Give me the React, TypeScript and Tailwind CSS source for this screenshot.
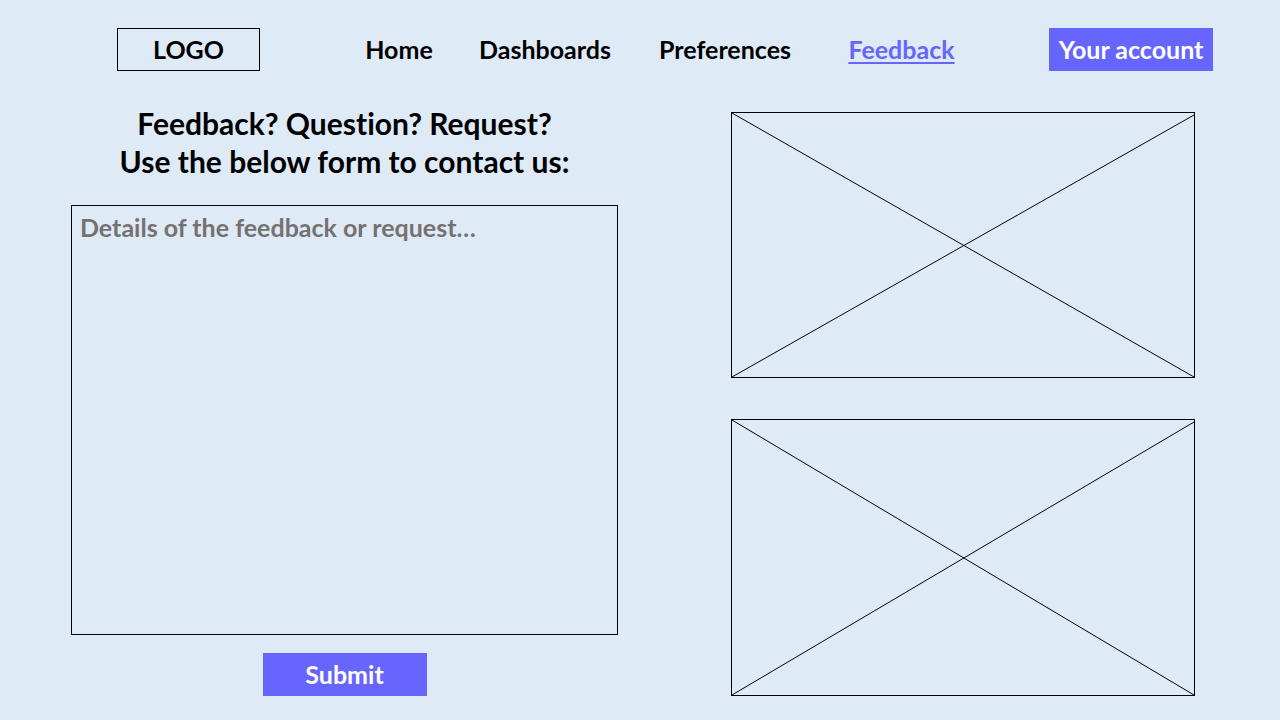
const navItems = [
  { label: "Home", href: "#home" },
  { label: "Dashboards", href: "#dashboards" },
  { label: "Preferences", href: "#preferences" },
  { label: "Feedback", href: "#feedback", current: true },
];

function ImagePlaceholder({ label }: { label: string }) {
  return (
    <div className="flex border border-black" role="img" aria-label={label}>
      <svg className="w-full" stroke="black" strokeWidth="1" aria-hidden="true">
        <line x1="0" y1="0" x2="100%" y2="100%" />
        <line x1="0" y1="100%" x2="100%" y2="2" />
      </svg>
    </div>
  );
}

export default function App() {
  return (
    <div className="flex min-h-screen flex-col bg-[#deeaf6] pt-7 pb-6 font-['Lato',sans-serif] text-[25px] leading-9 font-bold text-black [font-variant-ligatures:none]">
      <header className="flex items-center pr-[67px] pl-[117px]">
        <a
          href="#home"
          className="flex h-[43px] w-[143px] shrink-0 items-center justify-center border border-black pb-0.5"
        >
          LOGO
        </a>
        <nav
          aria-label="Main"
          className="mr-[62px] ml-[82px] grid flex-1 grid-cols-[114fr_178fr_182fr_171fr] justify-items-center pb-0.5"
        >
          {navItems.map((item) => (
            <a
              key={item.label}
              href={item.href}
              aria-current={item.current ? "page" : undefined}
              className={
                item.current
                  ? "text-[#6666ff] underline decoration-2 underline-offset-3"
                  : undefined
              }
            >
              {item.label}
            </a>
          ))}
        </nav>
        <button
          type="button"
          className="h-[43px] w-[164px] shrink-0 bg-[#6666ff] pb-0.5 whitespace-nowrap text-white"
        >
          Your account
        </button>
      </header>

      <main className="grid flex-1 grid-cols-[547fr_464fr] gap-x-[113px] pr-[85px] pl-[71px]">
        <form className="flex flex-col items-center pt-[33px]">
          <h1 className="text-center text-[30px] leading-[38px]">
            <label htmlFor="details">
              Feedback? Question? Request?
              <br />
              Use the below form to contact us:
            </label>
          </h1>
          <textarea
            id="details"
            placeholder="Details of the feedback or request…"
            className="mt-[25px] w-full flex-1 resize-none border border-black bg-transparent px-2 py-[3px] placeholder:text-[#767171] placeholder:opacity-100"
          />
          <button
            type="submit"
            className="mt-[18px] h-[43px] w-[164px] bg-[#6666ff] pb-0.5 text-white"
          >
            Submit
          </button>
        </form>
        <div className="grid grid-rows-[266fr_277fr] gap-y-[41px] pt-[41px]">
          <ImagePlaceholder label="First image placeholder" />
          <ImagePlaceholder label="Second image placeholder" />
        </div>
      </main>
    </div>
  );
}
